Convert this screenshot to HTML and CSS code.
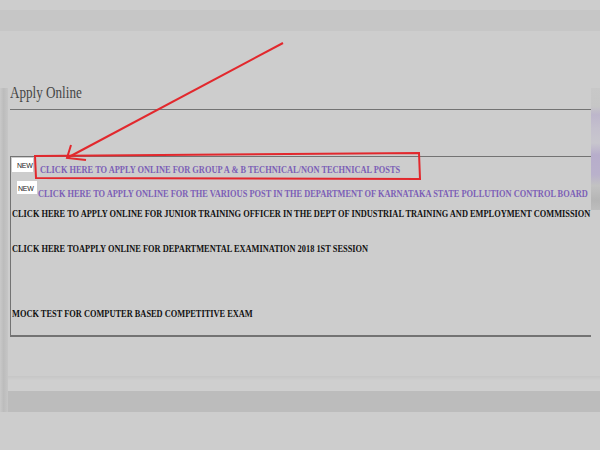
FILE: index.html
```html
<!DOCTYPE html>
<html lang="en">
<head>
  <meta charset="UTF-8" />
  <title>Apply Online</title>
  <link rel="stylesheet" href="styles.css">
</head>
<body>
  <div class="topband"></div>

  <div class="stage">
    <div class="edge"></div>
    <div class="stack">
      <div class="panel">
        <div class="main">
          <h2 class="title">Apply Online</h2>
          <hr class="rule" />

          <div class="list">
            <div class="row row-first">
              <span class="badge">NEW</span>
              <a class="link link-first" href="#">CLICK HERE TO APPLY ONLINE FOR GROUP A &amp; B TECHNICAL/NON TECHNICAL POSTS</a>
            </div>
            <div class="row row-second">
              <span class="badge badge-second">NEW</span>
              <a class="link link-second" href="#">CLICK HERE TO APPLY ONLINE FOR THE VARIOUS POST IN THE DEPARTMENT OF KARNATAKA STATE POLLUTION CONTROL BOARD</a>
            </div>
            <div class="row row-third">
              <a class="plain" href="#">CLICK HERE TO APPLY ONLINE FOR JUNIOR TRAINING OFFICER IN THE DEPT OF INDUSTRIAL TRAINING AND EMPLOYMENT COMMISSION</a>
            </div>
            <div class="row row-fourth">
              <a class="plain" href="#">CLICK HERE TOAPPLY ONLINE FOR DEPARTMENTAL EXAMINATION 2018 1ST SESSION</a>
            </div>
            <div class="row row-fifth">
              <a class="plain" href="#">MOCK TEST FOR COMPUTER BASED COMPETITIVE EXAM</a>
            </div>
          </div>
        </div>
        <div class="blur"></div>
      </div>
      <div class="gap"></div>
      <div class="band"></div>
    </div>
  </div>

  <!-- red markup drawn over the screenshot -->
  <svg class="marks" width="600" height="450" viewBox="0 0 600 450">
    <polygon points="35,156 419,153 420,179 36,178" fill="none" stroke="#e2282d" stroke-width="2" />
    <line x1="283" y1="43" x2="67" y2="158" stroke="#e2282d" stroke-width="2" />
    <polyline points="71,145 67,158 86,160" fill="none" stroke="#e2282d" stroke-width="2" />
  </svg>
</body>
</html>
```

FILE: styles.css
```css
:root {
  --bg: #cdcdcd;
  --line: #737373;
  --purple: #7c5fb6;
}

body {
  margin: 0;
  width: 600px;
  height: 450px;
  overflow: hidden;
  background: var(--bg);
  font-family: "Liberation Serif", serif;
  position: relative;
}

.topband {
  margin-top: 10px;
  height: 21px;
  background: #c6c6c6;
}

.stage {
  margin-top: 57px;
  display: grid;
  grid-template-columns: 8px 1fr;
}

.edge {
  background: linear-gradient(to right, #c9c9c9, #bcbcbc 45%, #c6c6c6);
}

.stack {
  min-width: 0;
}

.panel {
  height: 288px;
  display: flex;
  background: var(--bg);
}

.main {
  flex: 1;
  min-width: 0;
}

.blur {
  flex: none;
  width: 9px;
  height: 122px;
  background: linear-gradient(to bottom, #c8c8c8 0, #c6c6c6 15%, #bdb6cb 22%, #c4c0cd 33%, #c8c6cd 45%, #b7adcb 55%, #b9b1cb 71%, #c2c2c2 80%, #b5b5b5 92%, #bdbdbd 100%);
}

.gap {
  height: 15px;
  background: linear-gradient(to bottom, #c6c6c6, #cfcfcf 30%);
}

.band {
  height: 21px;
  background: #bcbcbc;
}

.title {
  margin: -3px 0 0 2px;
  font-size: 16px;
  line-height: 16px;
  font-weight: normal;
  color: #454545;
  white-space: nowrap;
  transform: scaleX(0.82);
  transform-origin: left center;
}

.rule {
  margin: 8px 0 0 2px;
  height: 0;
  border: 0;
  border-top: 1px solid var(--line);
}

.list {
  margin: 46px 0 0 2px;
  padding: 1px 0 15px 1px;
  border-top: 1px solid var(--line);
  border-left: 1px solid var(--line);
  border-bottom: 2px solid var(--line);
}

.row {
  display: flex;
  align-items: flex-start;
}

.badge {
  flex: none;
  width: 16px;
  height: 10px;
  padding: 4px 0 0 5px;
  background: #fff;
  font-family: "Liberation Sans", sans-serif;
  font-size: 7px;
  line-height: 7px;
  letter-spacing: -0.2px;
  color: #222;
}

.badge-second {
  margin-left: 5px;
  width: 19px;
  height: 9px;
  padding-left: 1px;
}

.link,
.plain {
  font-size: 11px;
  line-height: 14px;
  font-weight: bold;
  white-space: nowrap;
  text-decoration: none;
  transform: scaleX(0.76);
  transform-origin: left center;
}

.link {
  color: var(--purple);
}

.plain {
  color: #111;
}

.link-first {
  margin: 4px 0 0 7px;
}

.link-second {
  margin: 5px 0 0 1px;
}

.row-second {
  margin-top: 5px;
}

.row-third {
  margin-top: 6px;
}

.row-fourth {
  margin-top: 21px;
}

.row-fifth {
  margin-top: 51px;
}

.marks {
  position: absolute;
  left: 0;
  top: 0;
  pointer-events: none;
}
```
